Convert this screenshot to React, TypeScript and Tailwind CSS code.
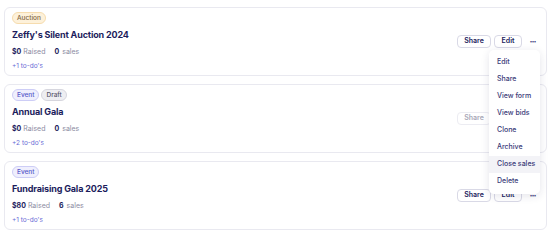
import React from 'react';

type BadgeKind = 'auction' | 'event' | 'draft';

interface CampaignProps {
  badges: { label: string; kind: BadgeKind }[];
  title: string;
  raised: string;
  sales: number;
  todos: number;
  shareDisabled?: boolean;
  menuOpen?: boolean;
}

const badgeStyles: Record<BadgeKind, string> = {
  auction: 'bg-[#fdf1da] border-[#f6dcae] text-[#7d6440]',
  event: 'bg-[#efeffd] border-[#cdcdf6] text-[#5656c8]',
  draft: 'bg-[#eeeef2] border-[#d6d6de] text-[#55556a]',
};

const menuItems = ['Edit', 'Share', 'View form', 'View bids', 'Clone', 'Archive', 'Close sales', 'Delete'];

const Badge: React.FC<{ label: string; kind: BadgeKind }> = ({ label, kind }) => (
  <span className={`inline-flex items-center h-[12px] px-[4px] rounded-full border text-[6.5px] font-medium leading-none ${badgeStyles[kind]}`}>
    {label}
  </span>
);

const ActionMenu = () => (
  <div className="absolute z-10 top-[42px] right-[6px] w-[51px] py-[4px] bg-white rounded-[5px] shadow-[0_2px_8px_rgba(30,30,80,0.12)]">
    {menuItems.map((item) => (
      <div
        key={item}
        className={`h-[17px] flex items-center pl-[8px] text-[7px] font-medium text-[#3a3a78] whitespace-nowrap ${item === 'Close sales' ? 'bg-[#f3f3f7]' : ''}`}
      >
        {item}
      </div>
    ))}
  </div>
);

const CampaignCard: React.FC<CampaignProps> = ({ badges, title, raised, sales, todos, shareDisabled, menuOpen }) => {
  return (
    <div className="relative flex items-center justify-between h-[69px] pl-[7px] pr-[6px] bg-white border border-[#e9e9f0] rounded-[6px]">
      <div className="flex flex-col">
        <div className="flex gap-[2px]">
          {badges.map((b) => (
            <Badge key={b.label} label={b.label} kind={b.kind} />
          ))}
        </div>
        <h2 className="mt-[4px] text-[9px] font-bold tracking-[-0.15px] text-[#1c1c5c] leading-[14px]">{title}</h2>
        <div className="mt-[5px] flex items-baseline text-[7px] leading-[10px]">
          <span className="font-bold text-[#1c1c5c]">{raised}</span>
          <span className="ml-[2px] text-[#8c8ca2]">Raised</span>
          <span className="ml-[9px] font-bold text-[#1c1c5c]">{sales}</span>
          <span className="ml-[3px] text-[#8c8ca2]">sales</span>
        </div>
        <div className="mt-[4px] text-[6.5px] leading-[10px] text-[#6a6ad6]">+{todos} to-do's</div>
      </div>
      <div className="flex items-center gap-[3px]">
        <button
          className={`h-[13px] w-[34px] rounded-[4px] border bg-white text-[7px] font-semibold ${
            shareDisabled ? 'border-[#ececf2] text-[#a8a8b8] font-normal' : 'border-[#d9d9e6] text-[#1c1c5c]'
          }`}
        >
          Share
        </button>
        <button className="h-[13px] w-[28px] rounded-[4px] border border-[#d9d9e6] bg-white text-[7px] font-semibold text-[#1c1c5c]">
          Edit
        </button>
        <span className="w-[15px] text-center text-[9px] leading-none font-bold text-[#3a3a78] tracking-[-1px]">···</span>
      </div>
      {menuOpen && <ActionMenu />}
    </div>
  );
};

const App = () => {
  return (
    <div className="w-[550px] h-[233px] bg-white pl-[4px] pr-[3px] pt-[7px] flex flex-col gap-[8px]" style={{ fontFamily: 'Inter, "Noto Sans", sans-serif' }}>
      <CampaignCard
        badges={[{ label: 'Auction', kind: 'auction' }]}
        title="Zeffy's Silent Auction 2024"
        raised="$0"
        sales={0}
        todos={1}
        menuOpen
      />
      <CampaignCard
        badges={[
          { label: 'Event', kind: 'event' },
          { label: 'Draft', kind: 'draft' },
        ]}
        title="Annual Gala"
        raised="$0"
        sales={0}
        todos={2}
        shareDisabled
      />
      <CampaignCard
        badges={[{ label: 'Event', kind: 'event' }]}
        title="Fundraising Gala 2025"
        raised="$80"
        sales={6}
        todos={1}
      />
    </div>
  );
};

export default App;
